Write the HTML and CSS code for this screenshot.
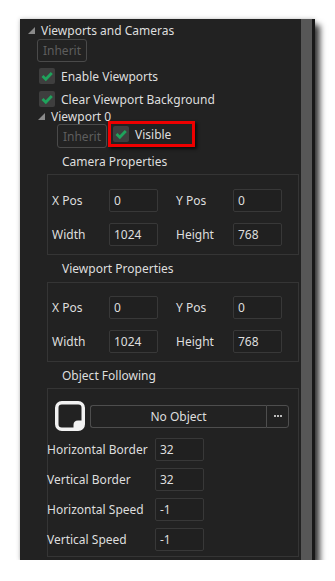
FILE: index.html
```html
<!DOCTYPE html>
<html>
<head>
<meta charset="utf-8">
<link rel="stylesheet" href="styles.css">
</head>
<body>
<div class="panel">
  <div class="content">
    <div class="tree hdr">
      <svg class="tri" viewBox="0 0 7 7"><polygon points="7,0 7,7 0,7" fill="#8a8a8a"/></svg>
      <span>Viewports and Cameras</span>
    </div>
    <div class="btn inherit1">Inherit</div>
    <div class="chk-row row1">
      <span class="chk"><svg viewBox="0 0 16 16"><path d="M3.5 8 L6.8 11.3 L12.8 5" fill="none" stroke="#1fa35c" stroke-width="2.8"/></svg></span>
      <span>Enable Viewports</span>
    </div>
    <div class="chk-row row2">
      <span class="chk"><svg viewBox="0 0 16 16"><path d="M3.5 8 L6.8 11.3 L12.8 5" fill="none" stroke="#1fa35c" stroke-width="2.8"/></svg></span>
      <span>Clear Viewport Background</span>
    </div>
    <div class="tree vp0">
      <svg class="tri" viewBox="0 0 7 7"><polygon points="7,0 7,7 0,7" fill="#8a8a8a"/></svg>
      <span>Viewport 0</span>
    </div>
    <div class="inh-row">
      <div class="btn inherit2">Inherit</div>
      <div class="redbox">
        <span class="chk"><svg viewBox="0 0 16 16"><path d="M3.5 8 L6.8 11.3 L12.8 5" fill="none" stroke="#1fa35c" stroke-width="2.8"/></svg></span>
        <span>Visible</span>
      </div>
    </div>

    <div class="sec-title t-cam">Camera Properties</div>
    <div class="group g-cam">
      <div class="frow">
        <span class="lbl">X Pos</span><span class="inp">0</span>
        <span class="lbl second">Y Pos</span><span class="inp">0</span>
      </div>
      <div class="frow">
        <span class="lbl">Width</span><span class="inp">1024</span>
        <span class="lbl second">Height</span><span class="inp">768</span>
      </div>
    </div>

    <div class="sec-title t-vp">Viewport Properties</div>
    <div class="group g-vp">
      <div class="frow">
        <span class="lbl">X Pos</span><span class="inp">0</span>
        <span class="lbl second">Y Pos</span><span class="inp">0</span>
      </div>
      <div class="frow">
        <span class="lbl">Width</span><span class="inp">1024</span>
        <span class="lbl second">Height</span><span class="inp">768</span>
      </div>
    </div>

    <div class="sec-title t-obj">Object Following</div>
    <div class="group g-obj">
      <div class="obj-row">
        <svg class="sprite" width="30" height="30" viewBox="0 0 30 30">
          <rect x="1.75" y="1.75" width="26.5" height="26.5" rx="5" fill="none" stroke="#f2f2f2" stroke-width="3.5"/>
          <path d="M18.5 29 V24 Q18.5 19.5 23 19.5 H29 V24 Q29 29 24 29 Z" fill="#f2f2f2"/>
        </svg>
        <div class="objbtn">No Object</div>
        <div class="dots"><i></i><i></i><i></i></div>
      </div>
      <div class="orow"><span class="olbl">Horizontal Border</span><span class="inp">32</span></div>
      <div class="orow"><span class="olbl">Vertical Border</span><span class="inp">32</span></div>
      <div class="orow"><span class="olbl">Horizontal Speed</span><span class="inp">-1</span></div>
      <div class="orow"><span class="olbl">Vertical Speed</span><span class="inp">-1</span></div>
    </div>
  </div>
  <div class="scroll"></div>
  <div class="edge"></div>
</div>
</body>
</html>
```
FILE: styles.css
```css
html, body {
  margin: 0;
  padding: 0;
  background: #ffffff;
}
body {
  font-family: "Noto Sans", "Open Sans", sans-serif;
  font-size: 12px;
  color: #dedede;
}
.panel {
  margin: 19px 0 0 20px;
  width: 295px;
  height: 541px;
  display: flex;
  background: #222222;
  box-shadow: 5px 6px 6px rgba(0,0,0,0.75), 0 0 4px rgba(0,0,0,0.25);
}
.content {
  width: 281px;
  flex: none;
}
.scroll {
  width: 11px;
  flex: none;
  background: #575757;
}
.edge {
  width: 3px;
  flex: none;
  background: #181818;
}
.tree {
  display: flex;
  align-items: center;
  white-space: nowrap;
}
.tri {
  width: 7px;
  height: 7px;
  margin-right: 6px;
  flex: none;
}
.hdr {
  margin-top: 2px;
  height: 18px;
  padding-left: 8px;
}
.vp0 {
  height: 10px;
  padding-left: 18px;
}
.btn {
  box-sizing: border-box;
  width: 50px;
  border: 1px solid #4a4a4a;
  border-radius: 3px;
  color: #5e5e5e;
  display: flex;
  align-items: center;
  justify-content: center;
}
.inherit1 {
  margin-left: 17px;
  height: 23px;
}
.chk-row {
  display: flex;
  align-items: center;
  padding-left: 19px;
}
.row1 { margin-top: 3px; height: 22px; }
.row2 { height: 24px; }
.chk {
  width: 16px;
  height: 16px;
  border-radius: 2px;
  background: #3e3e3e;
  margin-right: 6px;
  flex: none;
  display: block;
}
.chk svg { width: 16px; height: 16px; display: block; }
.inh-row {
  display: flex;
  align-items: flex-start;
  height: 27px;
  padding-left: 37px;
}
.inherit2 {
  margin-top: 3px;
  height: 24px;
}
.redbox {
  box-sizing: border-box;
  margin-left: 1px;
  width: 87px;
  height: 26px;
  border: 3px solid #ee0000;
  padding: 0 0 0 2px;
  display: flex;
  align-items: center;
  box-shadow: 2px 2px 3px rgba(0,0,0,0.7);
}
.redbox .chk { margin-right: 6px; }
.sec-title {
  padding-left: 42px;
  display: flex;
  align-items: center;
}
.t-cam { height: 26px; }
.t-vp { height: 27px; }
.t-obj { height: 26px; }
.group {
  box-sizing: border-box;
  margin-left: 27px;
  width: 252px;
  border: 1px solid #353535;
}
.g-cam { height: 81px; padding: 14px 0 0 4px; }
.g-vp { height: 80px; padding: 13px 0 0 4px; }
.frow {
  display: flex;
  align-items: center;
  height: 23px;
}
.frow + .frow { margin-top: 11px; }
.lbl {
  width: 57px;
  flex: none;
}
.lbl.second { margin-left: 18px; }
.inp {
  box-sizing: border-box;
  width: 49px;
  height: 23px;
  border: 1px solid #383838;
  border-radius: 2px;
  background: #202020;
  padding-left: 4px;
  display: flex;
  align-items: center;
  flex: none;
}
.g-obj {
  height: 169px;
  padding: 12px 0 0 0;
}
.obj-row {
  display: flex;
  align-items: center;
  height: 30px;
  padding-left: 7px;
}
.sprite { flex: none; display: block; }
.objbtn {
  box-sizing: border-box;
  margin-left: 5px;
  width: 176px;
  height: 23px;
  border: 1px solid #4e4e4e;
  border-right: none;
  border-radius: 3px 0 0 3px;
  display: flex;
  align-items: center;
  justify-content: center;
}
.dots {
  box-sizing: border-box;
  width: 23px;
  height: 23px;
  border: 1px solid #4e4e4e;
  border-radius: 0 3px 3px 0;
  display: flex;
  align-items: center;
  justify-content: center;
  gap: 1px;
}
.dots i {
  width: 2px;
  height: 2px;
  background: #bdbdbd;
  display: block;
}
.orow {
  display: flex;
  align-items: center;
  height: 23px;
  margin-top: 7px;
  margin-left: -1px;
}
.obj-row + .orow { margin-top: 7px; }
.olbl {
  width: 108px;
  flex: none;
  white-space: nowrap;
}
```
